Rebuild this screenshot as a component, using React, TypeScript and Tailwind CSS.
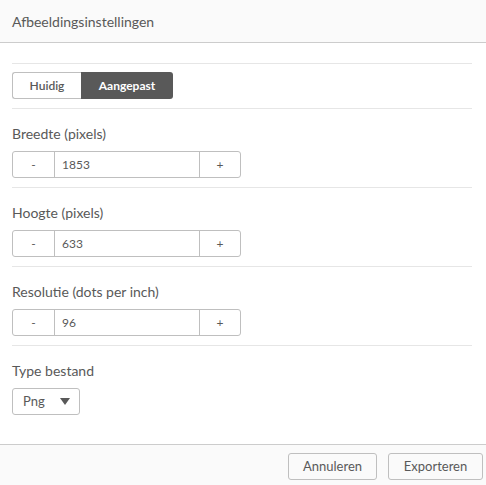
import { useState } from 'react';

const font = { fontFamily: 'Lato, "Open Sans", sans-serif' };

function Stepper({ label, value }: { label: string; value: string }) {
  return (
    <section className="border-t border-[#e6e6e6] pt-[15px] pb-[9px]">
      <div className="h-[20px] leading-[20px] text-[14px] text-[#595959] mb-[7px]">{label}</div>
      <div className="flex h-[27px] w-[229px] rounded-[3px] border border-[#bfbfbf] text-[#595959]">
        <button className="w-[42px] text-[12px] border-r border-[#bfbfbf]">-</button>
        <div className="w-[144px] flex items-center pl-[7px] text-[12px]">{value}</div>
        <button className="flex-1 text-[12px] border-l border-[#bfbfbf]">+</button>
      </div>
    </section>
  );
}

export default function App() {
  const [mode, setMode] = useState('custom');

  return (
    <div className="w-[486px] h-[485px] flex flex-col bg-white text-[#595959]" style={font}>
      <header className="h-[43px] shrink-0 bg-[#fafafa] border-b border-[#cccccc] flex items-center px-3 text-[14px]">
        Afbeeldingsinstellingen
      </header>

      <main className="flex-1 pt-[20px] pl-3 pr-[14px]">
        <section className="border-t border-[#e6e6e6] pt-[8px] pb-[9px]">
          <div className="flex h-[27px] w-[161px] text-[12px]">
            <button
              onClick={() => setMode('current')}
              className={
                mode === 'current'
                  ? 'w-[69px] rounded-l-[3px] bg-[#595959] text-white font-bold'
                  : 'w-[69px] rounded-l-[3px] border border-r-0 border-[#bfbfbf] text-[#595959] font-semibold'
              }
            >
              Huidig
            </button>
            <button
              onClick={() => setMode('custom')}
              className={
                mode === 'custom'
                  ? 'flex-1 rounded-r-[3px] bg-[#595959] text-white font-bold'
                  : 'flex-1 rounded-r-[3px] border border-l-0 border-[#bfbfbf] text-[#595959] font-semibold'
              }
            >
              Aangepast
            </button>
          </div>
        </section>

        <Stepper label="Breedte (pixels)" value="1853" />
        <Stepper label="Hoogte (pixels)" value="633" />
        <Stepper label="Resolutie (dots per inch)" value="96" />

        <section className="border-t border-[#e6e6e6] pt-[15px]">
          <div className="h-[20px] leading-[20px] text-[14px] mb-[7px]">Type bestand</div>
          <div className="flex items-center justify-between h-[27px] w-[68px] rounded-[3px] border border-[#bfbfbf] pl-[10px] pr-[9px] text-[13px]">
            <span>Png</span>
            <svg width="10" height="7" viewBox="0 0 10 7">
              <path d="M0 0h10L5 7z" fill="#595959" />
            </svg>
          </div>
        </section>
      </main>

      <footer className="h-[41px] shrink-0 bg-[#fafafa] border-t border-[#cccccc] flex justify-end gap-[11px] pt-[8px] pr-[3px]">
        <button className="w-[89px] h-[27px] rounded-[3px] border border-[#bfbfbf] bg-[#fafafa] text-[13px] text-[#595959]">
          Annuleren
        </button>
        <button className="w-[95px] h-[27px] rounded-[3px] border border-[#bfbfbf] bg-[#fafafa] text-[13px] text-[#595959]">
          Exporteren
        </button>
      </footer>
    </div>
  );
}
